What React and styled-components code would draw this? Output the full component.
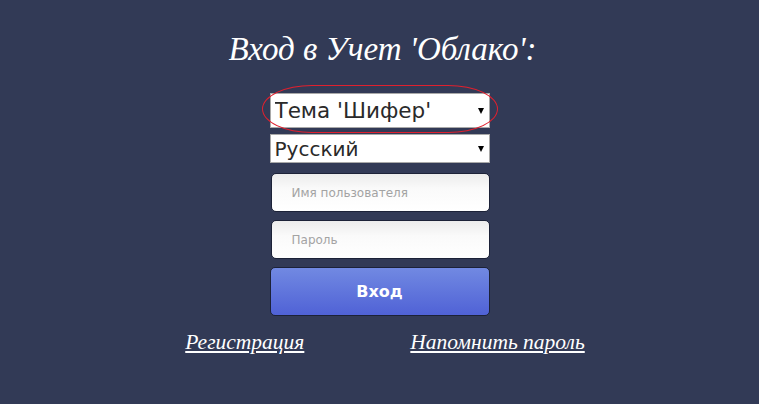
import styled, { createGlobalStyle } from "styled-components";

const GlobalStyle = createGlobalStyle`
    html, body {
        margin: 0;
        padding: 0;
        background-color: #323a56;
    }
`

export default function App() {
    return (
        <>
            <GlobalStyle />
            <Page>
                <Title>Вход в Учет 'Облако':</Title>
                <Form>
                    <SelectWrap tall>
                        <Select tall defaultValue="slate">
                            <option value="slate">Тема 'Шифер'</option>
                        </Select>
                        <Mark />
                    </SelectWrap>
                    <SelectWrap>
                        <Select defaultValue="ru">
                            <option value="ru">Русский</option>
                        </Select>
                    </SelectWrap>
                    <Input type="text" placeholder="Имя пользователя" />
                    <Input type="password" placeholder="Пароль" />
                    <Button>Вход</Button>
                </Form>
                <Links>
                    <Link href="#">Регистрация</Link>
                    <Link href="#">Напомнить пароль</Link>
                </Links>
            </Page>
        </>
    )
}

const Page = styled.div`
    width: 759px;
    height: 404px;
    display: flex;
    flex-direction: column;
    align-items: center;
    font-family: "Liberation Sans", Arial, sans-serif;
`

const Title = styled.h1`
    margin: 28px 0 0 6px;
    height: 42px;
    line-height: 42px;
    font-family: "Liberation Serif", "Times New Roman", serif;
    font-style: italic;
    font-weight: 400;
    font-size: 33px;
    color: white;
`

const Form = styled.div`
    width: 220px;
    margin-top: 23px;
    display: flex;
    flex-direction: column;
    align-items: stretch;
`

const SelectWrap = styled.div`
    position: relative;
    height: ${props => props.tall ? "35px" : "29px"};
    margin-bottom: ${props => props.tall ? "6px" : "10px"};

    &::after {
        content: "";
        position: absolute;
        right: 6px;
        top: 50%;
        margin-top: -3px;
        border-left: 3px solid transparent;
        border-right: 3px solid transparent;
        border-top: 6px solid #000;
        pointer-events: none;
    }
`

const Select = styled.select`
    appearance: none;
    width: 100%;
    height: 100%;
    box-sizing: border-box;
    margin: 0;
    padding: 0 20px 0 4px;
    border: 1px solid #a9a9a9;
    border-radius: 0;
    background-color: white;
    font-family: "DejaVu Sans", Tahoma, sans-serif;
    font-size: ${props => props.tall ? "21.5px" : "20px"};
    color: #2a2a2a;
    outline: none;
`

const Mark = styled.div`
    position: absolute;
    left: -8px;
    right: -8px;
    top: -8px;
    bottom: -5px;
    border: 1px solid #e0202e;
    border-radius: 50px / 24px;
    pointer-events: none;
`

const Input = styled.input`
    width: 219px;
    height: 39px;
    margin: 0 0 8px 1px;
    box-sizing: border-box;
    padding: 0 0 0 20px;
    border: 1px solid #1c2238;
    border-radius: 5px;
    background: linear-gradient(to bottom, #ececec 0%, #fafafa 40%, #ffffff 100%);
    font-family: "DejaVu Sans", Tahoma, sans-serif;
    font-size: 12px;
    color: #333;
    outline: none;

    &::placeholder {
        color: #a3a3a3;
    }
`

const Button = styled.button`
    width: 220px;
    height: 49px;
    margin-top: 0;
    box-sizing: border-box;
    border: 1px solid #1c2238;
    border-radius: 5px;
    background: linear-gradient(to bottom, #7189e2 0%, #5062d6 100%);
    color: white;
    font-family: "DejaVu Sans", Tahoma, sans-serif;
    font-size: 16px;
    font-weight: 700;
    cursor: pointer;
`

const Links = styled.div`
    margin-top: 14px;
    padding-left: 11px;
    display: flex;
    gap: 106px;
`

const Link = styled.a`
    font-family: "Liberation Serif", "Times New Roman", serif;
    font-style: italic;
    font-size: 21.5px;
    color: white;
    text-decoration: underline;
`
